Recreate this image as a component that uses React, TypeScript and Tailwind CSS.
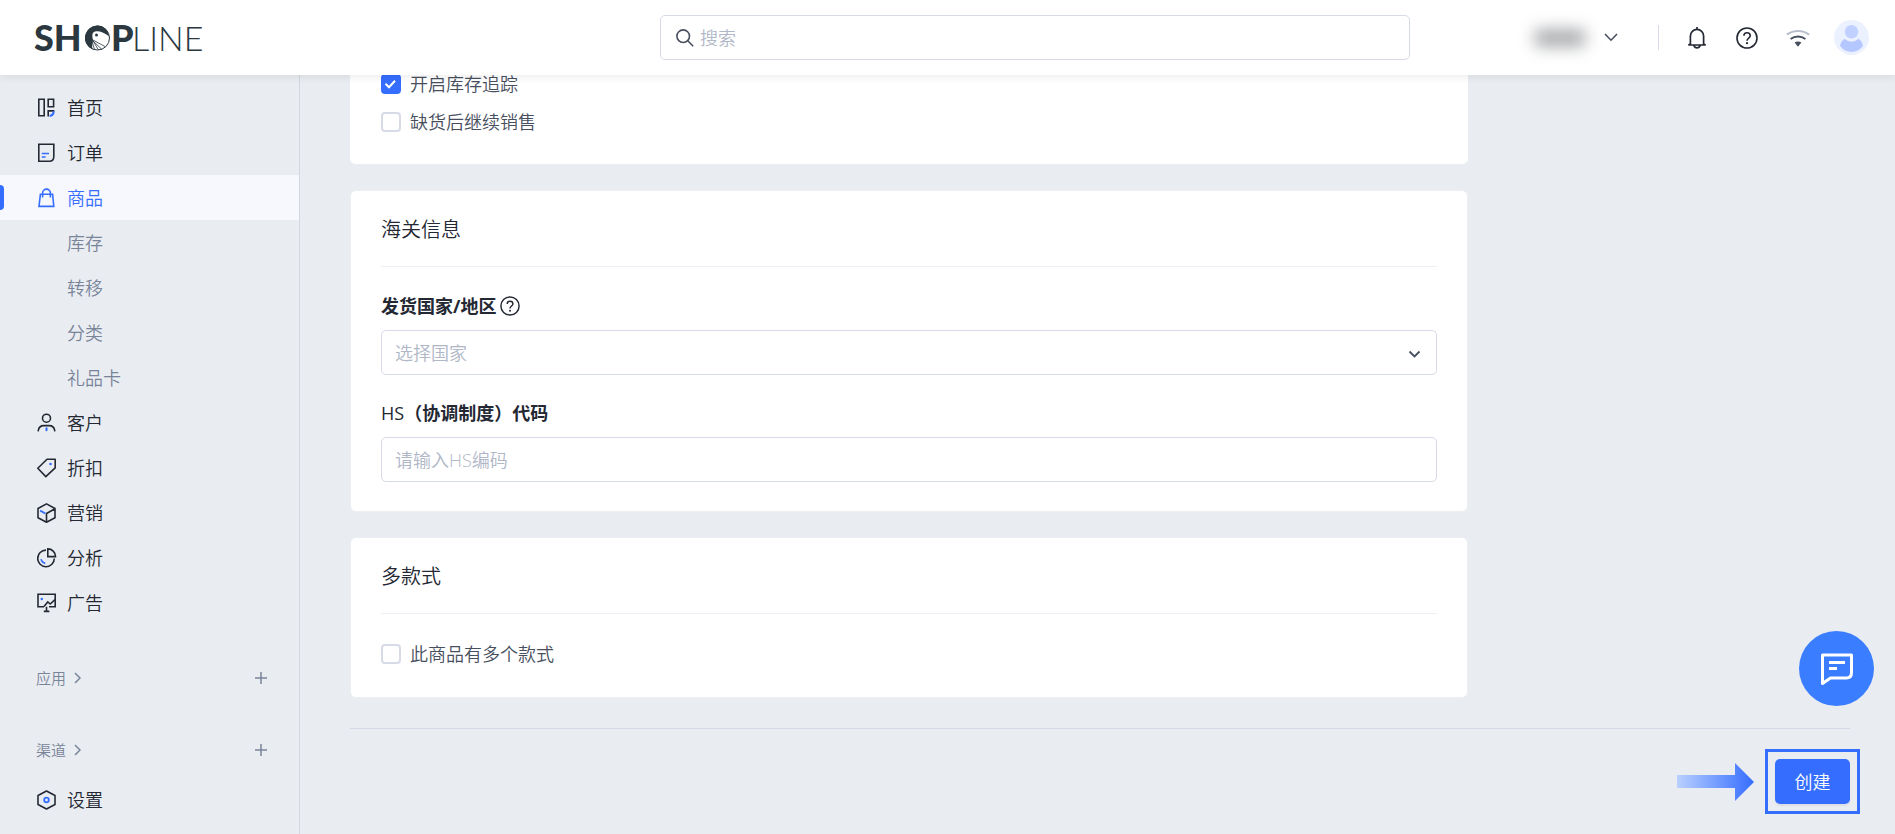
import React from 'react';

const INK = '#242833';
const BLUE = '#356dff';

const iconProps = {
  width: 20,
  height: 20,
  viewBox: '0 0 20 20',
  fill: 'none',
  stroke: INK,
  strokeWidth: 1.6,
  'aria-hidden': true,
  className: 'shrink-0',
};

const HomeIcon = () => (
  <svg {...iconProps}>
    <path d="M1.8 1.3h5.4v16.4H1.8zM11.2 1.3h5.4v7.4h-5.4zM11.2 18.5v-5.6h6.2" />
    <path d="M16.6 13.3c0 2.8-1.4 4.4-4 4.6" stroke={BLUE} strokeWidth="2.2" />
  </svg>
);

const OrderIcon = () => (
  <svg {...iconProps}>
    <path d="M1.8 1.3h15v12.2c0 2.8-1.8 4.8-4.6 4.8H1.8z" />
    <path d="M4.8 10.5h7.2M4.8 14h3.8" stroke={BLUE} />
  </svg>
);

const ProductIcon = () => (
  <svg {...iconProps} stroke={BLUE}>
    <path d="M3.4 6.2h12.2l1.2 12.2H2zM5.6 9.4V5a3.9 3.9 0 0 1 7.8 0v4.4" />
  </svg>
);

const CustomerIcon = () => (
  <svg {...iconProps} strokeLinecap="round">
    <circle cx="9.5" cy="5.2" r="4" />
    <path d="M1.2 17.8c.5-3.6 2.6-5.2 5.6-5.2h5.4c3 0 5.1 1.6 5.6 5.2" />
    <path d="M9.5 15.2v2" stroke={BLUE} strokeWidth="2" />
  </svg>
);

const DiscountIcon = () => (
  <svg {...iconProps} strokeLinejoin="round">
    <path d="M10 1.2h8.2v8.6L8.8 18.6.8 10.3z" />
    <circle cx="13.5" cy="6" r="1.3" fill={BLUE} stroke="none" />
  </svg>
);

const MarketingIcon = () => (
  <svg {...iconProps} strokeLinejoin="round">
    <path d="M9.5.9 18 5.5v9.3l-8.500 4.500L1 14.800V5.500zM9.500 19V10.500L18 5.800" />
    <path d="m3.2 7.6 5.2 2.9" stroke={BLUE} strokeWidth="1.8" />
  </svg>
);

const AnalyticsIcon = () => (
  <svg {...iconProps}>
    <path d="M9 2.1a8.300 8.300 0 1 0 8.300 8.300" />
    <path d="M10.8.9v7.700h7.700A7.700 7.700 0 0 0 10.800.9z" />
    <path d="M4 11.2c.5 2.3 2 3.8 4.3 4.3" stroke={BLUE} />
  </svg>
);

const AdsIcon = () => (
  <svg {...iconProps}>
    <path d="M7 13.800H1V1.300h17.200v12.500H12M9.500 13.800v4.600M6.800 18.400h5.600" />
    <path d="m7 13.600 3.800-4.600 2.400 2 4.800-4.400" />
    <circle cx="4.8" cy="6" r="1.2" fill={BLUE} stroke="none" />
  </svg>
);

const SettingsIcon = () => (
  <svg {...iconProps} strokeLinejoin="round">
    <path d="m9.500 1 8.500 4.500v9L9.500 19 1 14.500v-9z" />
    <circle cx="9.5" cy="10" r="2.3" stroke={BLUE} strokeWidth="1.8" />
  </svg>
);

const Logo = () => (
  <svg width="180" height="56" viewBox="-5 -13 180 56" role="img" aria-label="SHOPLINE" fill="#2b3840">
    <g fontFamily="Lato, sans-serif">
      <text x="-1" y="28" fontSize="36" fontWeight="900">SH</text>
      <text x="76" y="28" fontSize="36" fontWeight="900">P</text>
      <text x="97" y="28" fontSize="34" fontWeight="300">LINE</text>
    </g>
    <circle cx="62.5" cy="15" r="12" fill="#fff" stroke="#2b3840" />
    <path d="M62.500 2.500a12.500 12.500 0 0 0-5 24c-1-5 1-8 0-12-.6-3 .2-5.400 2.500-6 4-1 8 .5 14 4.800C73.500 7.500 68.800 2.500 62.500 2.500z" />
    <path d="m57 17 10 9.500M57.500 17l6 10M57 18l2.500 8.500M57 16.500l13 7" stroke="#2b3840" strokeWidth=".8" />
    <circle cx="61.5" cy="12" r="1.5" />
  </svg>
);

const HelpIcon = ({ size }: { size: number }) => (
  <svg width={size} height={size} viewBox="0 0 22 22" fill="none" stroke={INK} strokeWidth="1.6" aria-hidden>
    <circle cx="11" cy="11" r="10" />
    <path d="M7.900 8.800c0-1.800 1.300-3 3.100-3s3.200 1.100 3.200 2.900c0 2.200-3.200 2.500-3.200 5" />
    <circle cx="11" cy="16.2" r="1.1" fill={INK} stroke="none" />
  </svg>
);

interface NavItem {
  label: string;
  icon?: React.FC;
  active?: boolean;
}

const navItems: NavItem[] = [
  { label: '首页', icon: HomeIcon },
  { label: '订单', icon: OrderIcon },
  { label: '商品', icon: ProductIcon, active: true },
  { label: '库存' },
  { label: '转移' },
  { label: '分类' },
  { label: '礼品卡' },
  { label: '客户', icon: CustomerIcon },
  { label: '折扣', icon: DiscountIcon },
  { label: '营销', icon: MarketingIcon },
  { label: '分析', icon: AnalyticsIcon },
  { label: '广告', icon: AdsIcon },
];

const NavRow: React.FC<{ item: NavItem }> = ({ item }) => {
  const Icon = item.icon;
  const tone = item.active ? 'bg-[#f7f8fd] text-[#356dff]' : Icon ? 'text-[#242833]' : 'text-[#7a8499]';
  return (
    <a href="#" className={`relative flex h-[45px] items-center gap-[10px] pl-[37px] ${tone}`}>
      {item.active && <span className="absolute left-0 top-[10px] h-[25px] w-1 rounded-r bg-[#356dff]" />}
      {Icon ? <Icon /> : <span className="w-5" />}
      {item.label}
    </a>
  );
};

const NavSection: React.FC<{ label: string }> = ({ label }) => (
  <div className="flex h-9 items-center justify-between pl-9 pr-[31px] text-[15px] text-[#7a8499]">
    <a href="#" className="flex items-center gap-2">
      {label}
      <svg width="7" height="12" viewBox="0 0 7 12" fill="none" stroke="currentColor" strokeWidth="1.5" aria-hidden>
        <path d="m1 1 5 5-5 5" />
      </svg>
    </a>
    <button type="button" aria-label={`添加${label}`}>
      <svg width="14" height="14" viewBox="0 0 14 14" fill="none" stroke="currentColor" strokeWidth="1.5" aria-hidden>
        <path d="M7 1v12M1 7h12" />
      </svg>
    </button>
  </div>
);

const CheckRow: React.FC<{ label: string; defaultChecked?: boolean }> = ({ label, defaultChecked }) => (
  <label className="flex h-[38px] items-center gap-[9px] text-[#474f5e]">
    <span className="relative flex">
      <input
        type="checkbox"
        defaultChecked={defaultChecked}
        className="peer size-5 appearance-none rounded border-2 border-[#d7dbe8] bg-white checked:border-[#356dff] checked:bg-[#356dff]"
      />
      <svg
        className="pointer-events-none absolute inset-0 hidden peer-checked:block"
        width="20"
        height="20"
        viewBox="0 0 20 20"
        fill="none"
        stroke="#fff"
        strokeWidth="2"
        aria-hidden
      >
        <path d="m4.500 9.800 3.500 3.500 6-6.500" />
      </svg>
    </span>
    {label}
  </label>
);

const cardClass = 'rounded-md border border-[#eceef1] bg-white px-[30px]';

const CardTitle: React.FC<{ children: React.ReactNode }> = ({ children }) => (
  <h2 className="flex h-[76px] items-center border-b border-[#ecedf5] pt-[2px] text-xl text-[#242833]">{children}</h2>
);

export default function App() {
  return (
    <div className="flex h-screen flex-col overflow-hidden bg-[#e9edf2] font-['Open_Sans','Noto_Sans_CJK_SC',sans-serif] text-lg leading-7 font-[350]">
      {/* Top bar */}
      <header className="z-10 flex h-[75px] shrink-0 items-center bg-white shadow-[0_2px_8px_rgba(0,0,0,0.08)]">
        <a href="#" className="flex flex-1 pl-[30px]">
          <Logo />
        </a>
        <label className="flex h-[45px] w-[750px] items-center gap-[6px] rounded-[5px] border border-[#d7dbe8] pl-[15px]">
          <svg width="18" height="18" viewBox="0 0 18 18" fill="none" stroke="#474f5e" strokeWidth="1.6" aria-hidden>
            <circle cx="7.2" cy="7.2" r="6.3" />
            <path d="m11.800 11.800 5.400 5.400" />
          </svg>
          <input
            type="search"
            aria-label="搜索"
            placeholder="搜索"
            className="h-full flex-1 bg-transparent outline-none placeholder:text-[#b0b7c7]"
          />
        </label>
        <div className="flex w-[485px] items-center justify-end pr-[26px]">
          <button type="button" className="mr-10 flex items-center gap-[19px]">
            <span className="blur-[8px]" aria-hidden>
              <span className="block h-[18px] w-[50px] bg-[#a9abae]" />
            </span>
            <svg width="14" height="9" viewBox="0 0 14 9" fill="none" stroke="#474f5e" strokeWidth="1.6" aria-label="切换店铺">
              <path d="m1 1 6 6.200L13 1" />
            </svg>
          </button>
          <span className="mr-[27px] h-[25px] w-px bg-[#d7dbe8]" />
          <div className="flex items-center gap-7">
            <button type="button" aria-label="通知">
              <svg width="22" height="22" viewBox="0 0 22 22" fill="none" stroke={INK} strokeWidth="1.7" aria-hidden>
                <path d="M11 0v2.400M4.400 17V9a6.600 6.600 0 0 1 13.200 0v8l2 1H2.400zM7.800 18.400c.6 1.600 1.700 2.400 3.200 2.400s2.600-.8 3.200-2.400" />
              </svg>
            </button>
            <button type="button" aria-label="帮助">
              <HelpIcon size={22} />
            </button>
            <button type="button" aria-label="网络状态">
              <svg width="24" height="22" viewBox="0 0 24 22" fill="none" aria-hidden>
                <path d="M.8 7.600c6.600-4.800 15.800-4.800 22.400 0" stroke="#b8becc" strokeWidth="2" />
                <path d="M4.600 12c4.400-3.200 10.400-3.200 14.800 0" stroke="#474f5e" strokeWidth="2" />
                <path d="M8.600 15.600c2-1.500 4.800-1.500 6.800 0L12 19.800z" fill="#474f5e" />
              </svg>
            </button>
            <button type="button" aria-label="账户" className="-ml-1">
              <svg width="35" height="35" viewBox="0 0 35 35" aria-hidden>
                <circle cx="17.5" cy="17.5" r="17.5" fill="#ecf1ff" />
                <circle cx="17.5" cy="11.8" r="6.8" fill="#c1d1ff" />
                <path d="M10.500 18.800a10 10 0 0 0 14 0c2.500 1.800 4 4 4.500 7.200-3 3.900-6.800 6-11.500 6S9 29.900 6 26c.5-3.200 2-5.400 4.500-7.200z" fill="#b4c8ff" />
              </svg>
            </button>
          </div>
        </div>
      </header>

      <div className="flex min-h-0 flex-1">
        {/* Sidebar */}
        <nav className="flex w-[300px] shrink-0 flex-col border-r border-[#d3d7df] pt-[10px]">
          {navItems.map((item) => (
            <NavRow key={item.label} item={item} />
          ))}
          <div className="flex flex-col gap-9 pt-[35px] pb-[9px]">
            <NavSection label="应用" />
            <NavSection label="渠道" />
          </div>
          <NavRow item={{ label: '设置', icon: SettingsIcon }} />
        </nav>

        {/* Product form */}
        <main className="min-w-0 flex-1 overflow-hidden pl-[50px] pr-[45px]">
          <form className="-mt-[10px]">
            <div className="flex max-w-[1118px] flex-col gap-[25px]">
              <section className="rounded-b-md border-b border-[#eceef1] bg-white px-[31px] pb-[23px]">
                <CheckRow label="开启库存追踪" defaultChecked />
                <CheckRow label="缺货后继续销售" />
              </section>

              <section className={`${cardClass} pb-[29px]`}>
                <CardTitle>海关信息</CardTitle>
                <div className="flex flex-col gap-[10px] pt-[25px]">
                  <div className="flex h-7 items-center gap-1 font-bold text-[#242833]">
                    <label htmlFor="country">发货国家/地区</label>
                    <HelpIcon size={20} />
                  </div>
                  <div className="relative">
                    <select
                      id="country"
                      defaultValue=""
                      className="h-[45px] w-full appearance-none rounded-[5px] border border-[#d7dbe8] bg-white px-[13px] text-[#b0b7c7]"
                    >
                      <option value="">选择国家</option>
                    </select>
                    <svg
                      className="pointer-events-none absolute right-4 top-5"
                      width="13"
                      height="9"
                      viewBox="0 0 13 9"
                      fill="none"
                      stroke="#474f5e"
                      strokeWidth="1.8"
                      aria-hidden
                    >
                      <path d="m1.500 1.500 5 5 5-5" />
                    </svg>
                  </div>
                </div>
                <div className="flex flex-col gap-[10px] pt-6">
                  <label htmlFor="hs-code" className="h-7 font-bold text-[#242833]">
                    <span className="font-medium">HS</span>（协调制度）代码
                  </label>
                  <input
                    id="hs-code"
                    type="text"
                    placeholder="请输入HS编码"
                    className="h-[45px] w-full rounded-[5px] border border-[#d7dbe8] px-[13px] placeholder:text-[#b0b7c7]"
                  />
                </div>
              </section>

              <section className={`${cardClass} pb-6`}>
                <CardTitle>多款式</CardTitle>
                <div className="pt-[21px]">
                  <CheckRow label="此商品有多个款式" />
                </div>
              </section>
            </div>

            <div className="mt-[30px] flex items-center justify-end gap-[11px] border-t border-[#d5d9e9] pt-5">
              <svg width="77" height="38" viewBox="0 0 77 38" aria-hidden>
                <defs>
                  <linearGradient id="arrow" x1="0" x2="1" y1="0" y2="0">
                    <stop offset="0" stopColor="#b9d0ff" />
                    <stop offset="1" stopColor="#356dff" />
                  </linearGradient>
                </defs>
                <path d="M0 12h58V0L77 19 58 38V25H0z" fill="url(#arrow)" />
              </svg>
              <div className="-mr-[10px] border-3 border-[#356dff] p-[7px]">
                <button
                  type="submit"
                  className="block h-[45px] w-[75px] rounded-[5px] bg-[#356dff] text-white shadow-[0_2px_2px_rgba(0,0,0,0.06)]"
                >
                  创建
                </button>
              </div>
            </div>
          </form>
        </main>
      </div>

      <button
        type="button"
        aria-label="在线客服"
        className="fixed right-[21px] bottom-32 flex size-[75px] items-center justify-center rounded-full bg-[#3a7eff]"
      >
        <svg width="32" height="32" viewBox="0 0 32 32" fill="none" stroke="#fff" strokeWidth="3" aria-hidden>
          <path d="M1.500 2h29v17.500c0 3.500-2 5.500-5 5.500H9.500l-8 5.500z" strokeLinejoin="round" />
          <path d="M8 9.500h16M8 15.500h8" />
        </svg>
      </button>
    </div>
  );
}
